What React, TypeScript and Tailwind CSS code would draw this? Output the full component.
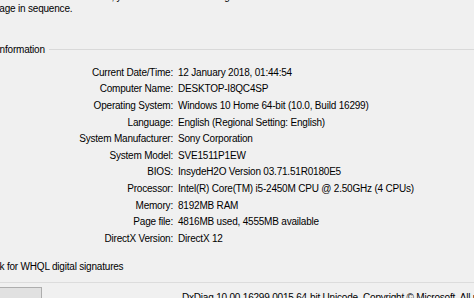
import React from "react";

const ROWS: [string, string][] = [
  ["Current Date/Time:", "12 January 2018, 01:44:54"],
  ["Computer Name:", "DESKTOP-I8QC4SP"],
  ["Operating System:", "Windows 10 Home 64-bit (10.0, Build 16299)"],
  ["Language:", "English (Regional Setting: English)"],
  ["System Manufacturer:", "Sony Corporation"],
  ["System Model:", "SVE1511P1EW"],
  ["BIOS:", "InsydeH2O Version 03.71.51R0180E5"],
  ["Processor:", "Intel(R) Core(TM) i5-2450M CPU @ 2.50GHz (4 CPUs)"],
  ["Memory:", "8192MB RAM"],
  ["Page file:", "4816MB used, 4555MB available"],
  ["DirectX Version:", "DirectX 12"],
];

export default function App() {
  return (
    <div className="relative h-[298px] w-[474px] overflow-hidden bg-[#f0f0f0] font-['Liberation_Sans',Arial,sans-serif] text-[10px] tracking-[-0.2px] text-black">
      {/* previous intro line, only descenders peek in */}
      <div className="h-[2px] overflow-hidden">
        <div className="-mt-[10px] ml-[-30px] whitespace-nowrap leading-[13px]">
          appropriate tab above. Otherwise, you can use the "Next Page" button below to visit each
        </div>
      </div>
      <div className="ml-[-6px] whitespace-nowrap leading-[13px]">page in sequence.</div>

      <div className="mt-[28px] flex items-center">
        <span className="ml-[-3px] whitespace-nowrap leading-[13px]">Information</span>
        <div className="ml-[4px] h-px flex-1 bg-[#d9d9d9]" />
      </div>

      <div className="mt-[8px] flex flex-col">
        {ROWS.map(([label, value]) => (
          <div key={label} className="flex h-[16.6px] items-center whitespace-nowrap">
            <span className="w-[173px] shrink-0 text-right">{label}</span>
            <span className="ml-[5px]">{value}</span>
          </div>
        ))}
      </div>

      <div className="mt-[13px] ml-[-23px] whitespace-nowrap leading-[13px]">
        Check for WHQL digital signatures
      </div>

      <div className="mt-[9px] h-px bg-[#dcdcdc]" />

      <div className="mt-[4px] flex items-start">
        <div className="h-[20px] w-[42px] shrink-0 border border-l-0 border-[#adadad] bg-[#e1e1e1]" />
        <div className="ml-[140px] mt-[4px] whitespace-nowrap leading-[13px]">
          DxDiag 10.00.16299.0015 64-bit Unicode&nbsp; Copyright © Microsoft. All rights reserved.
        </div>
      </div>
    </div>
  );
}
